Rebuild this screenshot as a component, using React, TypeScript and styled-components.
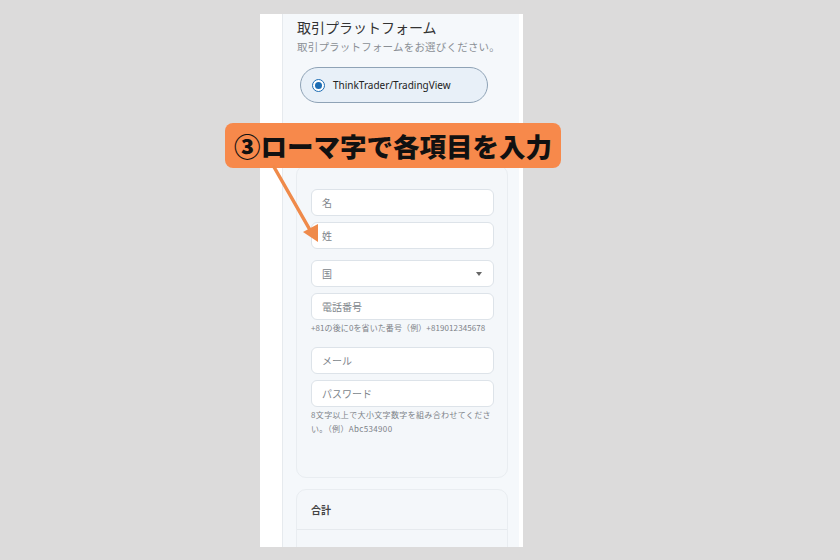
import styled, { createGlobalStyle } from "styled-components";

const GlobalStyle = createGlobalStyle`
  html, body {
    margin: 0;
    padding: 0;
    background: #dcdbdb;
  }
  * {
    box-sizing: border-box;
  }
`;

// 全体のキャンバス
const Page = styled.div`
  position: relative;
  width: 840px;
  height: 560px;
  padding: 14px 0 0 260px;
  overflow: hidden;
  font-family: "Noto Sans", "Noto Sans CJK JP", sans-serif;
`;

// スマホ画面のキャプチャ
const Screen = styled.div`
  display: flex;
  width: 263px;
  height: 533px;
  background: #fff;
  overflow: hidden;
`;

const SideStrip = styled.div<{ $w: number }>`
  flex: 0 0 ${(p) => p.$w}px;
  background: #fff;
`;

const Content = styled.div`
  flex: 1;
  display: flex;
  flex-direction: column;
  background: #f5f8fb;
  border-left: 1px solid #e6eaee;
  padding: 3px 0 0 14px;

  & > * {
    flex-shrink: 0;
  }
`;

const Title = styled.div`
  font-family: "Noto Sans CJK JP", sans-serif;
  font-size: 14px;
  line-height: 20px;
  color: #333;
`;

const Subtitle = styled.div`
  font-family: "Noto Sans CJK JP", sans-serif;
  font-size: 10.5px;
  line-height: 16px;
  color: #8a8f95;
  margin-top: 2px;
  letter-spacing: 0.2px;
`;

// プラットフォーム選択
const RadioPill = styled.div`
  display: flex;
  align-items: center;
  gap: 8px;
  width: 188px;
  height: 36px;
  margin: 12px 0 0 3px;
  padding-left: 11px;
  border-radius: 18px;
  border: 1px solid #8fa3b6;
  background: #e8f0f8;
  font-size: 10px;
  color: #222;
`;

const RadioDot = styled.span`
  position: relative;
  width: 13px;
  height: 13px;
  border-radius: 50%;
  border: 1.5px solid #1d6db3;
  background: #fff;

  &::after {
    content: "";
    position: absolute;
    inset: 2px;
    border-radius: 50%;
    background: #1d6db3;
  }
`;

const Card = styled.div<{ $mt: number; $h?: number }>`
  width: 212px;
  margin: ${(p) => p.$mt}px 0 0 -1px;
  ${(p) => (p.$h ? `height: ${p.$h}px;` : "")}
  border-radius: 10px;
  border: 1px solid #e9edf1;
  background: #f4f7fa;
`;

const FormBody = styled.div`
  display: flex;
  flex-direction: column;
  padding: 23px 13px 0 14px;
`;

const Field = styled.div<{ $mt?: number }>`
  display: flex;
  align-items: center;
  justify-content: space-between;
  height: 27px;
  margin-top: ${(p) => p.$mt ?? 0}px;
  padding: 0 11px 0 10px;
  border-radius: 6px;
  border: 1px solid #dde3e9;
  background: #fff;
  font-family: "Noto Sans CJK JP", sans-serif;
  font-size: 10px;
  color: #80858b;
`;

const Caret = styled.span`
  width: 0;
  height: 0;
  border-left: 3.5px solid transparent;
  border-right: 3.5px solid transparent;
  border-top: 4px solid #666;
`;

const Help = styled.div<{ $mt: number; $ls?: number }>`
  margin-top: ${(p) => p.$mt}px;
  font-family: "Noto Sans CJK JP", sans-serif;
  font-size: 8px;
  line-height: 14px;
  color: #7d8288;
  letter-spacing: ${(p) => p.$ls ?? 0.1}px;
  white-space: nowrap;
`;

const TotalHead = styled.div`
  height: 40px;
  padding: 12px 0 0 14px;
  border-bottom: 1px solid #e6eaee;
  font-family: "Noto Sans CJK JP", sans-serif;
  font-size: 10px;
  font-weight: 700;
  color: #444;
`;

// オレンジの吹き出し
const Callout = styled.div`
  position: absolute;
  left: 225px;
  top: 123px;
  width: 336px;
  height: 45px;
  display: flex;
  align-items: center;
  padding-left: 9px;
  border-radius: 8px;
  background: #f7894b;
  font-family: "Noto Sans CJK JP", sans-serif;
  font-size: 26.5px;
  font-weight: 900;
  color: #111;
  white-space: nowrap;
`;

const Arrow = styled.svg`
  position: absolute;
  left: 0;
  top: 0;
  pointer-events: none;
`;

export default function App() {
  return (
    <>
      <GlobalStyle />
      <Page>
        <Screen>
          <SideStrip $w={22} />
          <Content>
            <Title>取引プラットフォーム</Title>
            <Subtitle>取引プラットフォームをお選びください。</Subtitle>
            <RadioPill>
              <RadioDot />
              ThinkTrader/TradingView
            </RadioPill>
            <Card $mt={62} $h={313}>
              <FormBody>
                <Field>名</Field>
                <Field $mt={6}>姓</Field>
                <Field $mt={11}>
                  国<Caret />
                </Field>
                <Field $mt={6}>電話番号</Field>
                <Help $mt={1}>+81の後に0を省いた番号（例）+819012345678</Help>
                <Field $mt={12}>メール</Field>
                <Field $mt={6}>パスワード</Field>
                <Help $mt={1} $ls={0.35}>
                  8文字以上で大小文字数字を組み合わせてくださ
                  <br />
                  い。（例）Abc534900
                </Help>
              </FormBody>
            </Card>
            <Card $mt={11} $h={80}>
              <TotalHead>合計</TotalHead>
            </Card>
          </Content>
          <SideStrip $w={4} />
        </Screen>
        <Callout>③ローマ字で各項目を入力</Callout>
        <Arrow width="840" height="560" viewBox="0 0 840 560">
          <line x1="274" y1="167" x2="310" y2="230" stroke="#ef8a4a" strokeWidth="3.5" strokeLinecap="round" />
          <polygon points="318,242 303,232 318,224" fill="#ef8a4a" />
        </Arrow>
      </Page>
    </>
  );
}
